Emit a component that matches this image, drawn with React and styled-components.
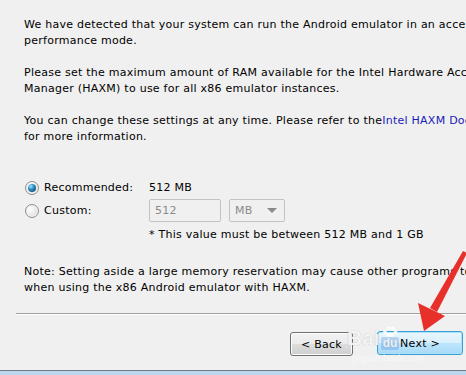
import React from 'react'
import styled, { createGlobalStyle } from 'styled-components'

const Global = createGlobalStyle`
  html, body {
    margin: 0;
    padding: 0;
    background: #f0f0f0;
    overflow: hidden;
  }
  body {
    font-family: "DejaVu Sans", "Liberation Sans", sans-serif;
    font-size: 11px;
    letter-spacing: 0.25px;
    color: #000;
  }
`

const Page = styled.div`
  position: relative;
  width: 466px;
  height: 375px;
  overflow: hidden;
  display: flex;
  flex-direction: column;
  background: #f0f0f0;
`

const Content = styled.div`
  padding: 17px 0 0 24px;
  display: flex;
  flex-direction: column;
`

const Para = styled.p`
  margin: 0 0 ${p => p.gap ?? 16}px;
  line-height: 16px;
  white-space: nowrap;
`

const Link = styled.span`
  color: #1a1ab8;
`

const Options = styled.div`
  margin-top: 31px;
  display: grid;
  grid-template-columns: 125px auto;
  grid-auto-rows: 23px;
  align-items: center;
`

const RadioLabel = styled.label`
  display: flex;
  align-items: center;
  gap: 5px;
  margin-left: 1px;
`

const Radio = styled.span`
  position: relative;
  width: 12px;
  height: 12px;
  border-radius: 50%;
  border: 1px solid #8e8f8f;
  background: radial-gradient(circle at 35% 35%, #ffffff 0%, #e6e6e6 60%, #c8c8c8 100%);
  box-shadow: inset 0 0 0 1px #f4f4f4;

  &::after {
    content: '';
    display: ${p => (p.checked ? 'block' : 'none')};
    position: absolute;
    left: 2px;
    top: 2px;
    width: 8px;
    height: 8px;
    border-radius: 50%;
    background: radial-gradient(circle at 35% 30%, #a6e3ff 0%, #2a8fc4 40%, #0d3a5c 100%);
  }
`

const Value = styled.span`
  display: flex;
  align-items: center;
  gap: 8px;
`

const Field = styled.div`
  box-sizing: border-box;
  width: ${p => p.w}px;
  height: 23px;
  border: 1px solid #c3c3c3;
  border-radius: 2px;
  background: #f0f0f0;
  color: #8a8a8a;
  display: flex;
  align-items: center;
  justify-content: space-between;
  padding: 0 7px 0 5px;
`

const Caret = styled.span`
  width: 0;
  height: 0;
  border-left: 5px solid transparent;
  border-right: 5px solid transparent;
  border-top: 5px solid #8a8a8a;
`

const Hint = styled.div`
  margin: 5px 0 0 125px;
  line-height: 16px;
  white-space: nowrap;
`

const Note = styled(Para)`
  margin-top: 21px;
`

const Footer = styled.div`
  flex: 1;
  display: flex;
  flex-direction: column;
  padding-top: 17px;
`

const Separator = styled.div`
  margin: 0 0 0 16px;
  height: 1px;
  background: #a0a0a0;
  border-bottom: 1px solid #ffffff;
`

const ButtonRow = styled.div`
  display: flex;
  gap: 24px;
  padding: 16px 0 0 290px;
  align-items: flex-start;
`

const Button = styled.div`
  box-sizing: border-box;
  width: ${p => p.w}px;
  height: 24px;
  margin-top: ${p => (p.primary ? '0' : '1px')};
  border-radius: 3px;
  display: flex;
  align-items: center;
  justify-content: center;
  font-size: 11px;
  border: 1px solid ${p => (p.primary ? '#3c9fd4' : '#707070')};
  background: ${p =>
    p.primary
      ? 'linear-gradient(#eaf6fd 0%, #d9f0fc 50%, #bee6fd 51%, #a7d9f5 100%)'
      : 'linear-gradient(#f2f2f2 0%, #ebebeb 50%, #dddddd 51%, #cfcfcf 100%)'};
  box-shadow: inset 0 0 0 1px ${p => (p.primary ? '#a9e3fb' : '#fcfcfc')};
`

const BottomBar = styled.div`
  margin-top: auto;
  height: 4px;
  border-top: 1px solid #6d7a88;
  background: #bcd6ee;
`

const Arrow = styled.svg`
  position: absolute;
  left: 0;
  top: 0;
  pointer-events: none;
`

const Watermark = styled.div`
  position: absolute;
  left: 347px;
  top: 326px;
  display: flex;
  align-items: flex-end;
  gap: 1px;
  color: rgba(255, 255, 255, 0.85);
  font-family: "Liberation Sans", sans-serif;
  font-weight: bold;
  font-size: 21px;
  letter-spacing: 0;
  text-shadow: 0 0 1px rgba(120, 120, 120, 0.5);
`

const Paw = styled.span`
  display: flex;
  flex-direction: column;
  align-items: center;
`

const Du = styled.span`
  font-size: 12px;
  line-height: 13px;
  padding: 0 2px;
  border-radius: 2px;
  background: rgba(80, 140, 220, 0.3);
`

const Site = styled.div`
  position: absolute;
  left: 352px;
  top: 353px;
  font-family: "Liberation Sans", sans-serif;
  font-size: 9px;
  letter-spacing: 0;
  color: rgba(255, 255, 255, 0.55);
`

const App = () => {
  return (
    <Page>
      <Global />
      <Content>
        <Para>
          We have detected that your system can run the Android emulator in an accelerated
          <br />
          performance mode.
        </Para>
        <Para>
          Please set the maximum amount of RAM available for the Intel Hardware Accelerated Execution
          <br />
          Manager (HAXM) to use for all x86 emulator instances.
        </Para>
        <Para gap={0}>
          You can change these settings at any time. Please refer to the<Link>Intel HAXM Documentation</Link>
          <br />
          for more information.
        </Para>

        <Options>
          <RadioLabel>
            <Radio checked />
            Recommended:
          </RadioLabel>
          <Value>512 MB</Value>
          <RadioLabel>
            <Radio />
            Custom:
          </RadioLabel>
          <Value>
            <Field w={72}>512</Field>
            <Field w={56}>
              MB
              <Caret />
            </Field>
          </Value>
        </Options>
        <Hint>* This value must be between 512 MB and 1 GB</Hint>

        <Note gap={0}>
          Note: Setting aside a large memory reservation may cause other programs to run slowly
          <br />
          when using the x86 Android emulator with HAXM.
        </Note>
      </Content>

      <Footer>
        <Separator />
        <ButtonRow>
          <Button w={63}>&lt; Back</Button>
          <Button primary w={86}>Next &gt;</Button>
        </ButtonRow>
        <BottomBar />
      </Footer>

      <Watermark>
        <span>Bai</span>
        <Paw>
          <svg width="16" height="11" viewBox="0 0 16 11">
            <circle cx="3" cy="6" r="2" fill="rgba(255,255,255,0.85)" />
            <circle cx="6.5" cy="2.5" r="2" fill="rgba(255,255,255,0.85)" />
            <circle cx="10.5" cy="2.5" r="2" fill="rgba(255,255,255,0.85)" />
            <circle cx="13.5" cy="6" r="2" fill="rgba(255,255,255,0.85)" />
            <ellipse cx="8" cy="9" rx="4" ry="2.5" fill="rgba(255,255,255,0.85)" />
          </svg>
          <Du>du</Du>
        </Paw>
      </Watermark>
      <Site>jingyan.baidu.com</Site>

      <Arrow width="466" height="375" viewBox="0 0 466 375">
        <polygon points="463,251 467,253 437,312 430,308" fill="#e8302a" />
        <polygon points="418,303 445,316 424,331" fill="#e8302a" />
      </Arrow>
    </Page>
  )
}

export default App
